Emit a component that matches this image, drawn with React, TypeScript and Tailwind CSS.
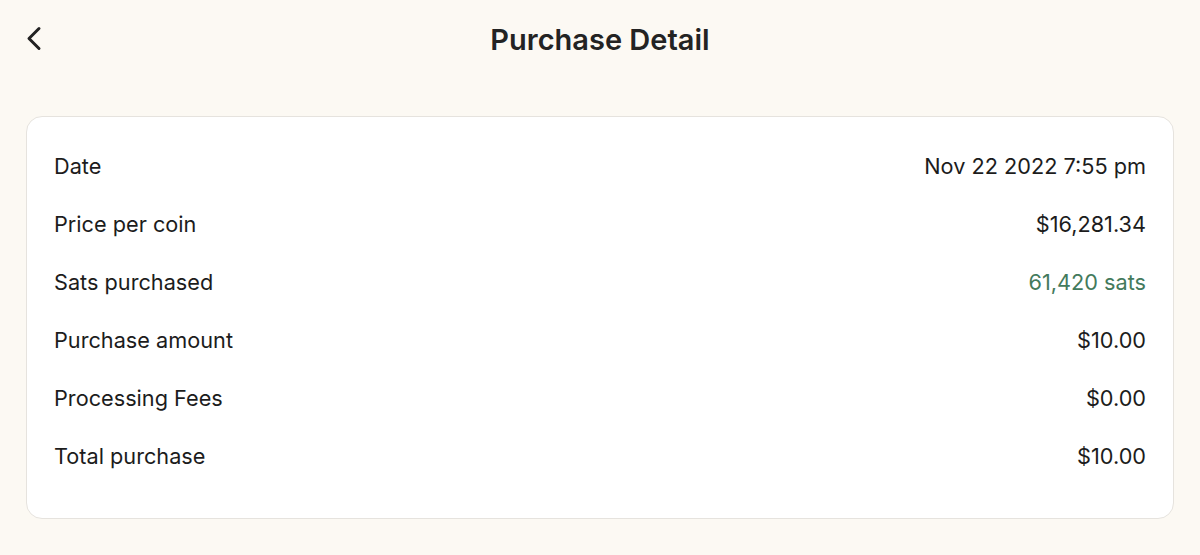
import React from "react";

const rows: { label: string; value: string; green?: boolean }[] = [
  { label: "Date", value: "Nov 22 2022 7:55 pm" },
  { label: "Price per coin", value: "$16,281.34" },
  { label: "Sats purchased", value: "61,420 sats", green: true },
  { label: "Purchase amount", value: "$10.00" },
  { label: "Processing Fees", value: "$0.00" },
  { label: "Total purchase", value: "$10.00" },
];

export default function App() {
  return (
    <div
      className="w-[1200px] h-[555px] bg-[#fcf9f3] text-[#1c1c1c] overflow-hidden"
      style={{ fontFamily: "Inter, 'Liberation Sans', sans-serif" }}
    >
      <div className="relative h-[80px] flex items-center justify-center">
        <svg
          className="absolute left-[24px] top-[24px]"
          width="24"
          height="30"
          viewBox="0 0 24 30"
          fill="none"
          stroke="#222"
          strokeWidth="3"
          strokeLinecap="round"
          strokeLinejoin="round"
        >
          <path d="M15 4.5 L5 14.5 L15 24.5" />
        </svg>
        <h1 className="text-[29px] font-semibold text-[#232323]">Purchase Detail</h1>
      </div>
      <div className="mx-[26px] mt-[36px] h-[403px] bg-white border border-[#e6e3de] rounded-[16px] px-[27px] pt-[20px]">
        {rows.map((r) => (
          <div key={r.label} className="h-[58px] flex items-center justify-between text-[21.7px]">
            <span>{r.label}</span>
            <span className={r.green ? "text-[#437a5c]" : ""}>{r.value}</span>
          </div>
        ))}
      </div>
    </div>
  );
}
